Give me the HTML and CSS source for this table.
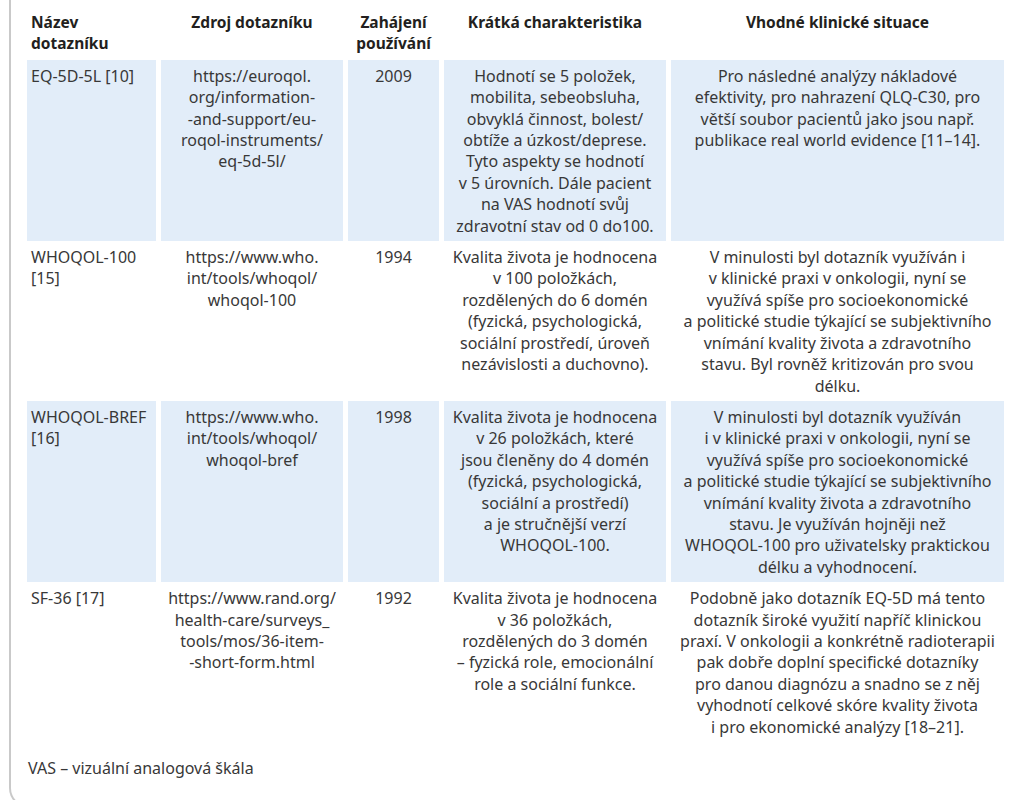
FILE: index.html
```html
<!DOCTYPE html>
<html lang="cs">
<head>
<meta charset="utf-8">
<title>Dotazníky kvality života</title>
<link rel="stylesheet" href="styles.css">
</head>
<body>
<div class="frame">
  <div class="qtable">
    <div class="cell head left">Název<br>dotazníku</div>
    <div class="cell head">Zdroj dotazníku</div>
    <div class="cell head">Zahájení<br>používání</div>
    <div class="cell head">Krátká charakteristika</div>
    <div class="cell head">Vhodné klinické situace</div>

    <div class="cell shade left">EQ-5D-5L [10]</div>
    <div class="cell shade">https://euroqol.<br>org/information-<br>-and-support/eu-<br>roqol-instruments/<br>eq-5d-5l/</div>
    <div class="cell shade">2009</div>
    <div class="cell shade">Hodnotí se 5 položek,<br>mobilita, sebeobsluha,<br>obvyklá činnost, bolest/<br>obtíže a úzkost/deprese.<br>Tyto aspekty se hodnotí<br>v 5 úrovních. Dále pacient<br>na VAS hodnotí svůj<br>zdravotní stav od 0 do100.</div>
    <div class="cell shade">Pro následné analýzy nákladové<br>efektivity, pro nahrazení QLQ-C30, pro<br>větší soubor pacientů jako jsou např.<br>publikace real world evidence [11–14].</div>

    <div class="cell left">WHOQOL-100<br>[15]</div>
    <div class="cell">https://www.who.<br>int/tools/whoqol/<br>whoqol-100</div>
    <div class="cell">1994</div>
    <div class="cell">Kvalita života je hodnocena<br>v 100 položkách,<br>rozdělených do 6 domén<br>(fyzická, psychologická,<br>sociální prostředí, úroveň<br>nezávislosti a duchovno).</div>
    <div class="cell">V minulosti byl dotazník využíván i<br>v klinické praxi v onkologii, nyní se<br>využívá spíše pro socioekonomické<br>a politické studie týkající se subjektivního<br>vnímání kvality života a zdravotního<br>stavu. Byl rovněž kritizován pro svou<br>délku.</div>

    <div class="cell shade left">WHOQOL-BREF<br>[16]</div>
    <div class="cell shade">https://www.who.<br>int/tools/whoqol/<br>whoqol-bref</div>
    <div class="cell shade">1998</div>
    <div class="cell shade">Kvalita života je hodnocena<br>v 26 položkách, které<br>jsou členěny do 4 domén<br>(fyzická, psychologická,<br>sociální a prostředí)<br>a je stručnější verzí<br>WHOQOL-100.</div>
    <div class="cell shade">V minulosti byl dotazník využíván<br>i v klinické praxi v onkologii, nyní se<br>využívá spíše pro socioekonomické<br>a politické studie týkající se subjektivního<br>vnímání kvality života a zdravotního<br>stavu. Je využíván hojněji než<br>WHOQOL-100 pro uživatelsky praktickou<br>délku a vyhodnocení.</div>

    <div class="cell left">SF-36 [17]</div>
    <div class="cell">https://www.rand.org/<br>health-care/surveys_<br>tools/mos/36-item-<br>-short-form.html</div>
    <div class="cell">1992</div>
    <div class="cell">Kvalita života je hodnocena<br>v 36 položkách,<br>rozdělených do 3 domén<br>– fyzická role, emocionální<br>role a sociální funkce.</div>
    <div class="cell">Podobně jako dotazník EQ-5D má tento<br>dotazník široké využití napříč klinickou<br>praxí. V onkologii a konkrétně radioterapii<br>pak dobře doplní specifické dotazníky<br>pro danou diagnózu a snadno se z něj<br>vyhodnotí celkové skóre kvality života<br>i pro ekonomické analýzy [18–21].</div>
  </div>
  <p class="note">VAS – vizuální analogová škála</p>
</div>
</body>
</html>
```

FILE: styles.css
```css
html, body {
  margin: 0;
  padding: 0;
  background: #ffffff;
}

body {
  font-family: "Noto Sans", "Open Sans", sans-serif;
  font-size: 16px;
  line-height: 21.4px;
  color: #383838;
}

.frame {
  margin-left: 9px;
  width: 1040px;
  height: 808px;
  box-sizing: border-box;
  border-left: 2px solid #c9c9c9;
  border-bottom: 2px solid #c9c9c9;
  border-bottom-left-radius: 20px;
  padding: 8px 0 0 16px;
}

.qtable {
  display: grid;
  grid-template-columns: 129px 182px 91px 222px 333px;
  column-gap: 5px;
}

.cell {
  box-sizing: border-box;
  padding: 6px 2px 4px;
  text-align: center;
  white-space: nowrap;
}

.cell.left {
  text-align: left;
  padding-left: 4px;
}

.cell.head {
  font-weight: 700;
  font-size: 15.5px;
  color: #231f20;
  padding: 4px 2px 5px;
}

.cell.head.left {
  padding-left: 4px;
}

.cell.shade {
  background: #e2edf9;
}

.note {
  margin: 16px 0 0;
  padding-left: 1px;
}
```
